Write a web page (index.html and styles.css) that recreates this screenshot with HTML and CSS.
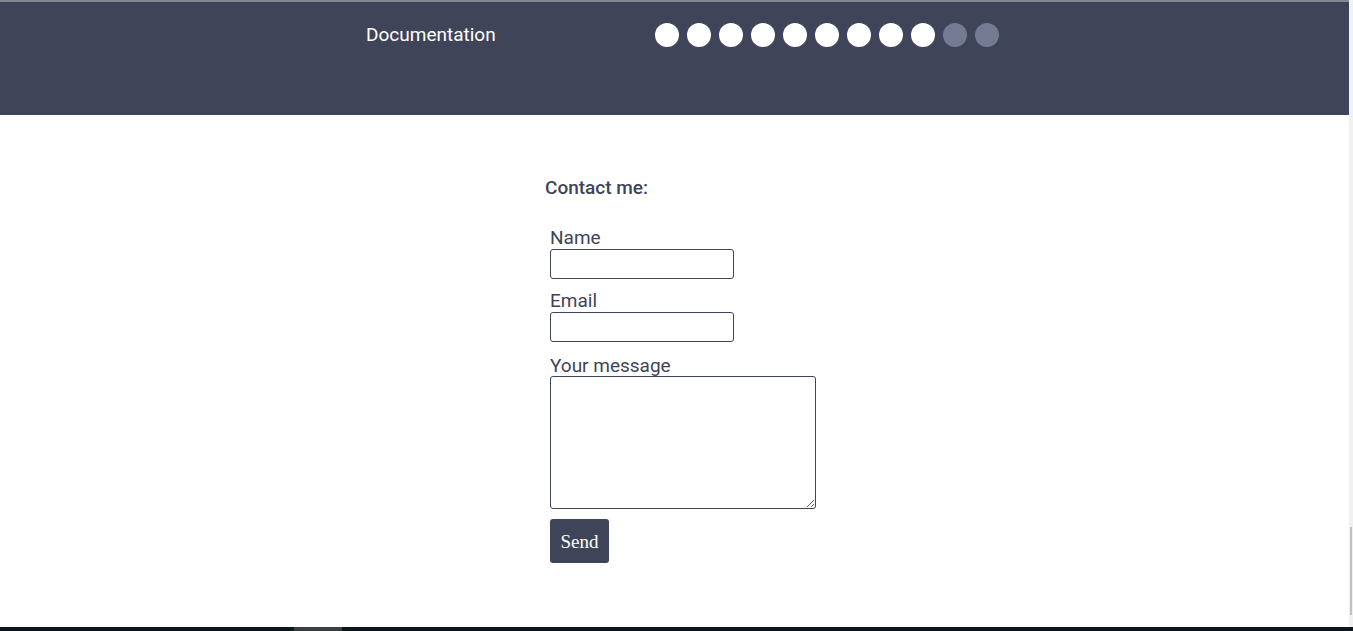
FILE: index.html
```html
<!DOCTYPE html>
<html lang="en">
<head>
<meta charset="utf-8">
<title>Contact</title>
<link rel="stylesheet" href="styles.css">
</head>
<body>
<div class="screen">
  <div class="viewport">
    <div class="page">
      <div class="topline"></div>
      <header class="header">
        <nav class="header-row">
          <a class="doc-link" href="#">Documentation</a>
          <div class="dots">
            <span class="dot"></span><span class="dot"></span><span class="dot"></span>
            <span class="dot"></span><span class="dot"></span><span class="dot"></span>
            <span class="dot"></span><span class="dot"></span><span class="dot"></span>
            <span class="dot dim"></span><span class="dot dim"></span>
          </div>
        </nav>
      </header>
      <main class="main">
        <section class="contact">
          <h2 class="contact-title">Contact me:</h2>
          <form class="form">
            <label class="label" for="name">Name</label>
            <input class="field" id="name" type="text">
            <label class="label" for="email">Email</label>
            <input class="field" id="email" type="email">
            <label class="label label-msg" for="msg">Your message</label>
            <textarea class="area" id="msg"></textarea>
            <button class="send" type="button">Send</button>
          </form>
        </section>
      </main>
    </div>
    <div class="scrollbar"><div class="thumb"></div></div>
  </div>
  <div class="taskbar"><span class="task-item"></span></div>
</div>
</body>
</html>
```
FILE: styles.css
```css
* { box-sizing: border-box; }
html, body { margin: 0; padding: 0; height: 100%; overflow: hidden; }
body { font-family: Roboto, "Liberation Sans", sans-serif; background: #ffffff; }

.screen { display: flex; flex-direction: column; height: 631px; width: 1353px; }
.viewport { flex: 1; display: flex; min-height: 0; }
.page { flex: 1; display: flex; flex-direction: column; background: #fff; }

.topline { height: 2px; background: #85878e; }
.header { height: 113px; background: #3f4458; }
.header-row { display: flex; align-items: center; padding: 21px 0 0 366px; height: 45px; }
.doc-link { color: #ffffff; text-decoration: none; font-size: 19px; line-height: 21px; margin-top: -2px; width: 289px; }
.dots { display: flex; gap: 8px; }
.dot { width: 24px; height: 24px; border-radius: 50%; background: #ffffff; }
.dot.dim { background: #737a92; }

.main { flex: 1; padding: 62px 0 0 545px; color: #3f4458; }
.contact-title { margin: 0; font-size: 19px; line-height: 21px; font-weight: 500; }
.form { display: flex; flex-direction: column; align-items: flex-start; padding: 29px 0 0 5px; }
.label { font-size: 19px; line-height: 21px; display: block; margin-top: 11px; }
.label:first-child { margin-top: 0; }
.label-msg { margin-top: 13px; }
.field { width: 184px; height: 30px; border: 1px solid #3f4458; border-radius: 3px; margin: 1px 0 0; padding: 2px 4px; font: inherit; }
.area { width: 266px; height: 133px; border: 1px solid #3f4458; border-radius: 3px; margin: 0; padding: 2px 4px; font: inherit; resize: both; }
.send { margin-top: 10px; width: 59px; height: 44px; background: #3f4458; color: #fff; border: none; border-radius: 3px; font-family: "Liberation Serif", serif; font-size: 19px; padding: 2px 0 0; }

.scrollbar { width: 4px; background: #f1f1f1; display: flex; flex-direction: column; padding-top: 527px; }
.thumb { height: 88px; margin-left: 1px; width: 2px; background: #c1c1c1; }

.taskbar { height: 4px; background: #0d161b; display: flex; }
.task-item { margin-left: 294px; width: 48px; background: #3a3f44; }
```
